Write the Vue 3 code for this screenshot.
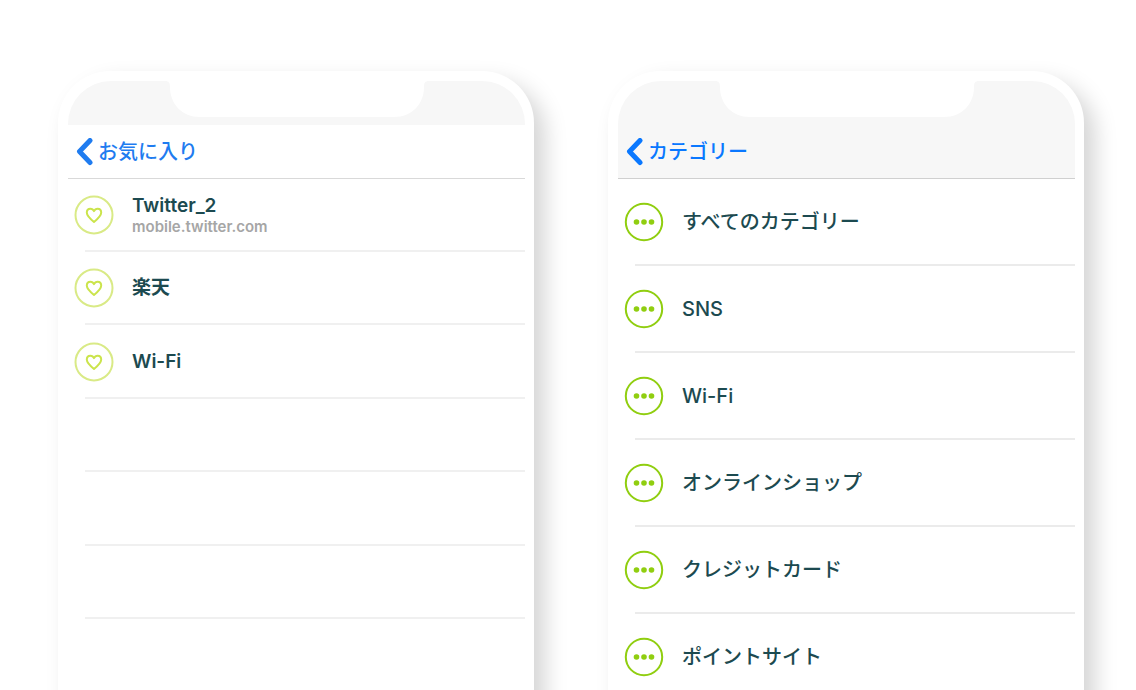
<script setup>
const favorites = [
  { name: 'Twitter_2', site: 'mobile.twitter.com' },
  { name: '楽天' },
  { name: 'Wi-Fi' },
  {},
  {},
  {},
]

const categories = [
  'すべてのカテゴリー',
  'SNS',
  'Wi-Fi',
  'オンラインショップ',
  'クレジットカード',
  'ポイントサイト',
]
</script>

<template>
  <main class="page">
    <section class="phone favorites">
      <div class="screen">
        <svg class="notch" viewBox="0 0 264 36" aria-hidden="true">
          <path d="M0 0C4 0 5 2 5 6C5 23 17 36 35 36H229C247 36 259 23 259 6C259 2 260 0 264 0Z" />
        </svg>
        <div class="status"></div>
        <header class="bar">
          <button type="button" class="back">
            <svg class="chevron" viewBox="0 0 18 28" aria-hidden="true">
              <path d="M14 2.5L3.5 13.5L14 24.5" />
            </svg>
            <span>お気に入り</span>
          </button>
        </header>
        <ul class="list">
          <li v-for="(item, i) in favorites" :key="i" class="row">
            <a v-if="item.name" href="#" class="item">
              <svg class="badge" viewBox="0 0 40 40" aria-hidden="true">
                <circle cx="20" cy="20" r="18.5" />
                <path
                  class="heart"
                  d="M20 27C16 23.8 12.8 21.2 12.8 17.6C12.8 15.2 14.4 13.7 16.4 13.7C18 13.7 19.3 14.6 20 16.2C20.7 14.6 22 13.7 23.6 13.7C25.6 13.7 27.2 15.2 27.2 17.6C27.2 21.2 24 23.8 20 27Z"
                />
              </svg>
              <span class="texts">
                <span class="name">{{ item.name }}</span>
                <span v-if="item.site" class="site">{{ item.site }}</span>
              </span>
            </a>
          </li>
        </ul>
      </div>
    </section>

    <section class="phone categories">
      <div class="screen">
        <svg class="notch" viewBox="0 0 264 36" aria-hidden="true">
          <path d="M0 0C4 0 5 2 5 6C5 23 17 36 35 36H229C247 36 259 23 259 6C259 2 260 0 264 0Z" />
        </svg>
        <div class="status"></div>
        <header class="bar">
          <button type="button" class="back">
            <svg class="chevron" viewBox="0 0 18 28" aria-hidden="true">
              <path d="M14 2.5L3.5 13.5L14 24.5" />
            </svg>
            <span>カテゴリー</span>
          </button>
        </header>
        <ul class="list">
          <li v-for="name in categories" :key="name" class="row">
            <a href="#" class="item">
              <svg class="badge" viewBox="0 0 40 40" aria-hidden="true">
                <circle cx="20" cy="20" r="18.2" />
                <g class="dots">
                  <circle cx="12.5" cy="20" r="2.8" />
                  <circle cx="20" cy="20" r="2.8" />
                  <circle cx="27.5" cy="20" r="2.8" />
                </g>
              </svg>
              <span class="texts">
                <span class="name">{{ name }}</span>
              </span>
            </a>
          </li>
        </ul>
      </div>
    </section>
  </main>
</template>

<style>
body {
  margin: 0;
  background: #fff;
}
</style>

<style scoped>
.page {
  box-sizing: border-box;
  height: 100vh;
  overflow: hidden;
  display: grid;
  grid-template-columns: 1fr 1fr;
  gap: 74px;
  padding: 71px 52px 0 58px;
  background: #fff;
  font-family: Inter, "Noto Sans CJK JP", sans-serif;
}

.phone {
  box-sizing: border-box;
  min-height: 100vh;
  padding: 10px 9px 10px 10px;
  border-radius: 52px;
  background: #fff;
  box-shadow: 11px 11px 22px rgba(0, 0, 0, 0.17);
}

.screen {
  position: relative;
  overflow: hidden;
  border-radius: 43px 43px 0 0;
}

.notch {
  position: absolute;
  top: 0;
  left: 50%;
  width: 264px;
  height: 36px;
  margin-left: -132px;
  fill: #fff;
}

.status {
  height: 44px;
  background: #f7f7f7;
}

.bar {
  box-sizing: border-box;
  height: 54px;
  padding-left: 8px;
  border-bottom: 1px solid #d9d9d9;
  display: flex;
  align-items: center;
}

.categories .bar {
  background: #f7f7f7;
  border-bottom-color: #d0d0d0;
}

.back {
  display: flex;
  align-items: center;
  gap: 4px;
  padding: 0;
  border: 0;
  background: none;
  color: #1f7cf0;
  font: 500 20px/28px Inter, "Noto Sans CJK JP", sans-serif;
}

.categories .back {
  color: #0a78ff;
}

.chevron {
  width: 18px;
  height: 28px;
  fill: none;
  stroke: currentColor;
  stroke-width: 5;
  stroke-linecap: round;
  stroke-linejoin: round;
}

.list {
  margin: 0;
  padding: 0;
  list-style: none;
}

.row {
  box-sizing: border-box;
  position: relative;
  height: 87px;
}

.row::after {
  content: "";
  position: absolute;
  right: 0;
  bottom: 0;
  left: 17px;
  height: 2px;
  background: #ebebeb;
}

.favorites .row {
  height: 73px;
}

.favorites .row:nth-child(odd):not(:first-child) {
  height: 74px;
}

.favorites .row::after {
  background: #f0f0f0;
}

.item {
  box-sizing: border-box;
  height: 100%;
  display: flex;
  align-items: center;
  gap: 18px;
  padding: 0 0 2px 6px;
  color: #1c4a50;
  text-decoration: none;
}

.favorites .item {
  padding-bottom: 1px;
}

.badge {
  flex: none;
  width: 40px;
  height: 40px;
  fill: none;
  stroke: #90ce10;
  stroke-width: 2;
}

.favorites .badge {
  stroke: #d9ea86;
}

.favorites .heart {
  stroke: #cbe44c;
  stroke-linejoin: round;
}

.dots {
  fill: #90ce10;
  stroke: none;
}

.texts {
  display: flex;
  flex-direction: column;
}

.name {
  font-size: 20px;
  font-weight: 500;
  line-height: 24px;
}

.favorites .name {
  font-size: 19px;
  font-weight: 600;
}

.site {
  color: #a6a6a6;
  font-size: 15px;
  font-weight: 600;
  line-height: 18px;
}
</style>
